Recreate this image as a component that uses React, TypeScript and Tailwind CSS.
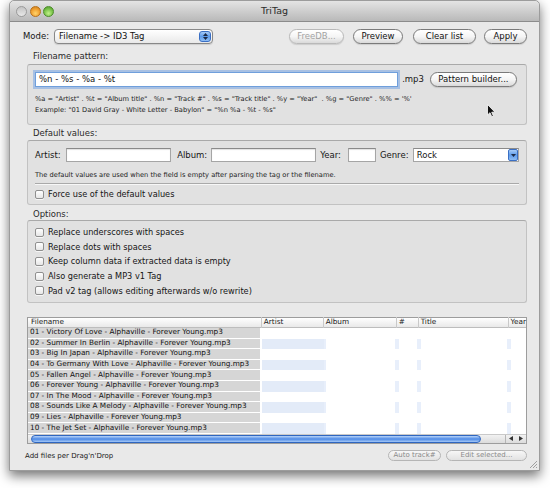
import React from 'react';

const files = [
  '01 - Victory Of Love - Alphaville - Forever Young.mp3',
  '02 - Summer In Berlin - Alphaville - Forever Young.mp3',
  '03 - Big In Japan - Alphaville - Forever Young.mp3',
  '04 - To Germany With Love - Alphaville - Forever Young.mp3',
  '05 - Fallen Angel - Alphaville - Forever Young.mp3',
  '06 - Forever Young - Alphaville - Forever Young.mp3',
  '07 - In The Mood - Alphaville - Forever Young.mp3',
  '08 - Sounds Like A Melody - Alphaville - Forever Young.mp3',
  '09 - Lies - Alphaville - Forever Young.mp3',
  '10 - The Jet Set - Alphaville - Forever Young.mp3',
];

const options = [
  'Replace underscores with spaces',
  'Replace dots with spaces',
  'Keep column data if extracted data is empty',
  'Also generate a MP3 v1 Tag',
  'Pad v2 tag (allows editing afterwards w/o rewrite)',
];

const PushButton = ({ label, className, disabled }: { label: string; className: string; disabled?: boolean }) => (
  <div
    className={`flex h-[15px] items-center justify-center rounded-full border bg-gradient-to-b from-white via-[#f5f5f5] to-[#dadada] text-[8.5px] leading-none shadow-[0_1px_1px_rgba(0,0,0,0.12)] ${
      disabled ? 'border-[#b9b9b9] text-[#a3a3a3]' : 'border-[#7a7a7a] text-[#111]'
    } ${className}`}
  >
    {label}
  </div>
);

const SmallButton = ({ label, className }: { label: string; className: string }) => (
  <div
    className={`flex h-[11px] items-center justify-center rounded-full border border-[#b5b5b5] bg-gradient-to-b from-[#f7f7f7] to-[#e2e2e2] text-[7px] leading-none text-[#8a8a8a] ${className}`}
  >
    {label}
  </div>
);

const CheckBox = ({ label, className = 'h-[14.6px]' }: { label: string; className?: string }) => (
  <div className={`flex items-center gap-[4px] ${className}`}>
    <span className="h-[9px] w-[9px] rounded-[2px] border border-[#8f8f8f] bg-gradient-to-b from-white to-[#e6e6e6] shadow-[0_1px_0_rgba(255,255,255,0.7)]" />
    <span className="text-[8.2px] leading-none text-[#151515]">{label}</span>
  </div>
);

const TextField = ({ className, value = '' }: { className: string; value?: string }) => (
  <div
    className={`flex h-[14px] items-center border border-[#a5a5a5] border-t-[#8a8a8a] bg-white pl-[3px] text-[8.5px] shadow-[inset_0_1px_1px_rgba(0,0,0,0.12)] ${className}`}
  >
    {value}
  </div>
);

const GroupLabel = ({ text, className }: { text: string; className: string }) => (
  <div className={`flex h-[12px] items-center pl-[6px] text-[8.5px] leading-none text-[#2a2a2a] ${className}`}>{text}</div>
);

export default function App() {
  return (
    <div className="relative h-[488px] w-[550px] overflow-hidden bg-white font-['DejaVu_Sans',sans-serif]">
      <div className="relative ml-[9px] flex h-[471px] w-[531px] flex-col rounded-t-[5px] border border-[#9c9c9c] bg-[#e9e9e9] shadow-[0_5px_12px_rgba(0,0,0,0.55)]">
        {/* title bar */}
        <div className="grid h-[21px] shrink-0 grid-cols-[1fr_auto_1fr] items-center rounded-t-[5px] border-b border-[#8c8c8c] bg-gradient-to-b from-[#e4e4e4] to-[#b9b9b9]">
          <div className="flex items-center gap-[2.5px] pl-[6px]">
            <span className="h-[11px] w-[11px] rounded-full border border-[#9a9a9a] bg-gradient-to-b from-[#c4c4c4] to-[#e8e8e8]" />
            <span className="h-[11px] w-[11px] rounded-full border border-[#b7701a] bg-[radial-gradient(circle_at_50%_70%,#ffd36b,#f0a030_55%,#c47a1c)]" />
            <span className="h-[11px] w-[11px] rounded-full border border-[#4c8c2a] bg-[radial-gradient(circle_at_50%_70%,#c2f08a,#79c34a_55%,#4d9528)]" />
          </div>
          <div className="text-[9.5px] text-[#2b2b2b]">TriTag</div>
          <div />
        </div>

        <div className="flex flex-1 flex-col pl-[17px] pr-[12px]">
          {/* mode row */}
          <div className="-ml-[4px] mt-[7px] flex h-[15px] items-center">
            <span className="text-[8.5px] text-[#151515]">Mode:</span>
            <div className="ml-[5px] flex h-[15px] w-[159px] items-center justify-between rounded-[4px] border border-[#888] bg-gradient-to-b from-white to-[#e9e9e9] pl-[4px] pr-[1px] text-[8.5px] text-[#111] shadow-[0_1px_1px_rgba(0,0,0,0.12)]">
              <span>Filename -&gt; ID3 Tag</span>
              <span className="flex h-[11px] w-[12px] flex-col items-center justify-center gap-[1px] rounded-[3px] border border-[#3a6fc4] bg-gradient-to-b from-[#a7cbf6] via-[#5d9bea] to-[#8fbdf3]">
                <svg width="5" height="3" viewBox="0 0 5 3"><path d="M2.5 0 L5 3 L0 3 Z" fill="#1d2a44" /></svg>
                <svg width="5" height="3" viewBox="0 0 5 3"><path d="M0 0 L5 0 L2.5 3 Z" fill="#1d2a44" /></svg>
              </span>
            </div>
            <div className="flex-1" />
            <PushButton label="FreeDB..." className="w-[55px]" disabled />
            <PushButton label="Preview" className="ml-[9px] w-[50px]" />
            <PushButton label="Clear list" className="ml-[10px] w-[63px]" />
            <PushButton label="Apply" className="ml-[8px] w-[43px]" />
          </div>

          {/* filename pattern */}
          <GroupLabel text="Filename pattern:" className="mt-[6px]" />
          <div className="mt-[2px] flex flex-col rounded-[3px] border border-[#c2c2c2] border-t-[#a9a9a9] bg-[#e1e1e1] pb-[8px] pl-[7px] pr-[9px] pt-[6px]">
            <div className="flex h-[16px] items-center">
              <div className="flex h-[15px] w-[367px] items-center border border-[#6f9fdc] bg-white pl-[3px] text-[8.5px] text-[#111] shadow-[0_0_0_2px_rgba(120,165,230,0.55)]">
                %n - %s - %a - %t
              </div>
              <span className="ml-[4px] text-[8.5px] text-[#151515]">.mp3</span>
              <PushButton label="Pattern builder..." className="ml-[6px] w-[88px]" />
            </div>
            <div className="mt-[7px] flex h-[11px] items-center whitespace-pre text-[6.7px] text-[#222]">
              {'%a = "Artist" . %t = "Album title" . %n = "Track #" . %s = "Track title" . %y = "Year"  . %g = "Genre" . %% = \'%\''}
            </div>
            <div className="flex h-[11px] items-center whitespace-pre text-[6.7px] text-[#222]">
              {'Example: "01 David Gray - White Letter - Babylon" = "%n %a - %t - %s"'}
            </div>
          </div>

          {/* default values */}
          <GroupLabel text="Default values:" className="mt-[2px]" />
          <div className="mt-[1px] flex flex-col rounded-[3px] border border-[#c2c2c2] border-t-[#a9a9a9] bg-[#e1e1e1] pb-[3px] pl-[7px] pr-[7px] pt-[7px]">
            <div className="flex h-[14px] items-center text-[8.5px] text-[#151515]">
              <span className="w-[31px]">Artist:</span>
              <TextField className="w-[106px]" />
              <span className="ml-[6px] w-[34px]">Album:</span>
              <TextField className="w-[106px]" />
              <span className="ml-[4px] w-[28px]">Year:</span>
              <TextField className="w-[28px]" />
              <span className="ml-[4px] w-[33px]">Genre:</span>
              <div className="flex h-[14px] w-[107px] items-center justify-between border border-[#a5a5a5] border-t-[#8a8a8a] bg-white pl-[3px] text-[8.5px]">
                <span>Rock</span>
                <span className="flex h-[12px] w-[10px] items-center justify-center rounded-[2px] border border-[#3a6fc4] bg-gradient-to-b from-[#a7cbf6] via-[#5d9bea] to-[#8fbdf3]">
                  <svg width="5" height="3" viewBox="0 0 5 3"><path d="M0 0 L5 0 L2.5 3 Z" fill="#1d2a44" /></svg>
                </span>
              </div>
            </div>
            <div className="mt-[8px] flex h-[11px] items-center text-[6.7px] text-[#222]">
              The default values are used when the field is empty after parsing the tag or the filename.
            </div>
            <div className="mt-[2px] h-[2px] border-t border-b border-t-[#a9a9a9] border-b-[#f7f7f7]" />
            <CheckBox label="Force use of the default values" className="mt-[2px] h-[14px]" />
          </div>

          {/* options */}
          <GroupLabel text="Options:" className="mt-[3px]" />
          <div className="flex flex-col rounded-[3px] border border-[#c2c2c2] border-t-[#a9a9a9] bg-[#e1e1e1] pb-[4px] pl-[7px] pt-[4px]">
            {options.map((o) => (
              <CheckBox key={o} label={o} />
            ))}
          </div>

          {/* file table */}
          <div className="mt-[14px] flex flex-col border border-[#9d9d9d] bg-white text-[7.3px] text-[#1a1a1a]">
            <div className="flex h-[10px] items-center border-b border-[#bdbdbd] bg-gradient-to-b from-white to-[#e9e9e9]">
              <div className="w-[234px] border-r border-[#c9c9c9] pl-[3px]">Filename</div>
              <div className="w-[62px] border-r border-[#c9c9c9] pl-[2px]">Artist</div>
              <div className="w-[73px] border-r border-[#c9c9c9] pl-[2px]">Album</div>
              <div className="w-[22px] border-r border-[#c9c9c9] pl-[2px]">#</div>
              <div className="w-[90px] border-r border-[#c9c9c9] pl-[2px]">Title</div>
              <div className="flex-1 pl-[2px]">Year</div>
            </div>
            {files.map((f, i) => {
              const even = i % 2 === 1;
              return (
                <div key={f} className={`flex h-[10.6px] ${even ? 'bg-[#edf3fd]' : 'bg-white'}`}>
                  <div className="flex w-[234px] items-center border-b border-r-[2px] border-white bg-[#d6d6d6] pl-[2px] text-[#111]">
                    {f}
                  </div>
                  <div className={`w-[62px] ${even ? 'bg-[#e3ebf8]' : ''}`} />
                  <div className={`w-[73px] ${even ? 'border-x-[2px] border-[#e8effb] bg-white' : ''}`} />
                  <div className={`w-[22px] ${even ? 'border-x-[2px] border-[#e8effb] bg-white' : ''}`} />
                  <div className={`w-[90px] ${even ? 'border-x-[2px] border-[#e8effb] bg-white' : ''}`} />
                  <div className={`flex-1 ${even ? 'border-l-[2px] border-[#e8effb] bg-white' : ''}`} />
                </div>
              );
            })}
            <div className="flex h-[9px] items-center border-t border-[#c9c9c9] bg-gradient-to-b from-[#f2f2f2] to-[#dcdcdc]">
              <div className="ml-[3px] h-[8px] w-[450px] rounded-full border border-[#2f66c0] bg-gradient-to-b from-[#b8d4f8] via-[#4d8ae6] to-[#a5c8f6]" />
              <div className="flex-1" />
              <div className="flex h-full w-[21px] items-center justify-around border-l border-[#b5b5b5]">
                <svg width="4" height="5" viewBox="0 0 4 5"><path d="M4 0 L4 5 L0 2.5 Z" fill="#333" /></svg>
                <svg width="4" height="5" viewBox="0 0 4 5"><path d="M0 0 L4 2.5 L0 5 Z" fill="#333" /></svg>
              </div>
            </div>
          </div>

          {/* bottom row */}
          <div className="-ml-[2px] mt-[6px] flex h-[12px] items-center">
            <span className="text-[7px] text-[#1a1a1a]">Add files per Drag'n'Drop</span>
            <div className="flex-1" />
            <SmallButton label="Auto track#" className="w-[53px]" />
            <SmallButton label="Edit selected..." className="ml-[5px] w-[81px]" />
          </div>
        </div>

        {/* resize grip */}
        <svg className="absolute bottom-[2px] right-[2px]" width="8" height="8" viewBox="0 0 8 8">
          <path d="M1 8 L8 1 M4 8 L8 4 M7 8 L8 7" stroke="#8d8d8d" strokeWidth="0.8" />
        </svg>

        {/* mouse pointer */}
        <svg className="absolute left-[477px] top-[103px]" width="9" height="14" viewBox="0 0 9 14">
          <path d="M0.5 0.5 L0.5 11 L3 8.7 L4.8 12.8 L6.4 12.1 L4.7 8.2 L8 8.2 Z" fill="#111" stroke="#fff" strokeWidth="0.8" />
        </svg>
      </div>
    </div>
  );
}
